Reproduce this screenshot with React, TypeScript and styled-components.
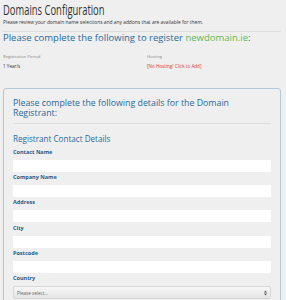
import * as React from 'react'
import styled, { createGlobalStyle } from 'styled-components'

const GlobalStyle = createGlobalStyle`
  html, body {
    margin: 0;
    padding: 0;
    background: #efefef;
    font-family: "Open Sans", "Liberation Sans", sans-serif;
    overflow: hidden;
  }
`

const Page = styled.div`
  padding: 0 5px 0 3px;
  width: 286px;
  box-sizing: border-box;
`

const Title = styled.h1`
  display: block;
  width: max-content;
  margin: 0;
  padding-top: 1px;
  font-size: 14.6px;
  font-weight: 400;
  line-height: 16px;
  color: #333;
  white-space: nowrap;
  transform: scaleX(0.645);
  transform-origin: left center;
`

const Intro = styled.p`
  margin: 2px 0 0;
  font-size: 4.9px;
  line-height: 6px;
  color: #333;
`

const Rule = styled.hr<{ $m?: string }>`
  border: 0;
  border-top: 1px solid #dddddd;
  margin: ${p => p.$m || '6px 0 0'};
`

const RegisterHeading = styled.h2`
  margin: 0;
  font-size: 9.5px;
  line-height: 11px;
  font-weight: 400;
  color: #286b9b;

  span {
    color: #62ba50;
  }
`

const Summary = styled.div`
  display: grid;
  grid-template-columns: 144px 1fr;
  margin-top: 11px;
`

const SummaryLabel = styled.div`
  font-size: 4.2px;
  line-height: 6px;
  color: #888;
`

const SummaryValue = styled.div<{ $alert?: boolean }>`
  margin-top: 3px;
  font-size: 4.6px;
  line-height: 6px;
  color: ${p => (p.$alert ? '#de3a3e' : '#333')};
`

const Panel = styled.div`
  margin-top: 19px;
  border: 1px solid #b3c8da;
  border-radius: 3px;
  padding: 9px 9px 20px;
`

const PanelHeading = styled.h3`
  margin: 0;
  max-width: 245px;
  font-size: 8.8px;
  line-height: 10px;
  font-weight: 400;
  color: #286b9b;
`

const SectionHeading = styled.h4`
  margin: 10px 0 4.5px;
  font-size: 8.1px;
  line-height: 10px;
  font-weight: 400;
  color: #286b9b;
`

const Field = styled.div`
  display: flex;
  flex-direction: column;
  margin-top: 2.4px;
`

const Label = styled.label`
  margin-bottom: 4px;
  font-size: 5.5px;
  line-height: 7px;
  font-weight: 700;
  color: #215d8c;
`

const Input = styled.input`
  margin: 0;
  height: 12px;
  border: 0;
  background: #fff;
  box-sizing: border-box;
`

const Select = styled.div`
  height: 13px;
  display: flex;
  align-items: center;
  justify-content: space-between;
  padding: 0 3px 0 3px;
  box-sizing: border-box;
  background: linear-gradient(#f7f7f7, #e4e4e4);
  border: 1px solid #d6d6d6;
  border-radius: 2px;
  font-size: 4.6px;
  color: #666;
`

const Arrows = () => (
  <svg width="3" height="6" viewBox="0 0 3 6">
    <path d="M0 2.5 L1.5 0.5 L3 2.5 Z M0 3.5 L1.5 5.5 L3 3.5 Z" fill="#555" />
  </svg>
)

const fields = ['Contact Name', 'Company Name', 'Address', 'City', 'Postcode']

export default function App() {
  return (
    <Page>
      <GlobalStyle />
      <Title>Domains Configuration</Title>
      <Intro>Please review your domain name selections and any addons that are available for them.</Intro>
      <Rule />
      <RegisterHeading>
        Please complete the following to register <span>newdomain.ie</span>:
      </RegisterHeading>
      <Summary>
        <div>
          <SummaryLabel>Registration Period</SummaryLabel>
          <SummaryValue>1 Year/s</SummaryValue>
        </div>
        <div>
          <SummaryLabel>Hosting</SummaryLabel>
          <SummaryValue $alert>[No Hosting! Click to Add]</SummaryValue>
        </div>
      </Summary>
      <Panel>
        <PanelHeading>Please complete the following details for the Domain Registrant:</PanelHeading>
        <Rule $m="5px 0 0" />
        <SectionHeading>Registrant Contact Details</SectionHeading>
        {fields.map(f => (
          <Field key={f}>
            <Label>{f}</Label>
            <Input />
          </Field>
        ))}
        <Field>
          <Label>Country</Label>
          <Select>
            Please select...
            <Arrows />
          </Select>
        </Field>
      </Panel>
    </Page>
  )
}
